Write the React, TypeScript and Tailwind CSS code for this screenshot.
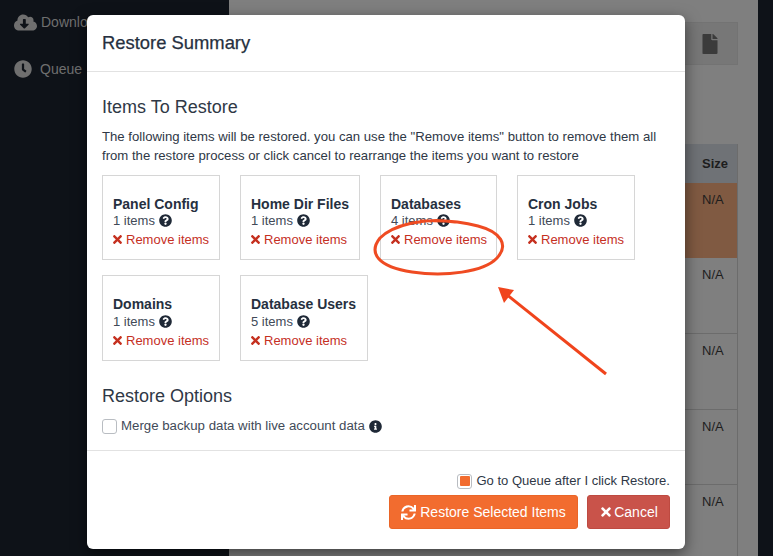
import React from "react";
import { FaCloudDownloadAlt, FaClock, FaFile, FaQuestionCircle, FaTimes, FaInfoCircle, FaSync } from "react-icons/fa";

const rowOne = [
  { t: "Panel Config", n: 1, w: "w-[118px]" },
  { t: "Home Dir Files", n: 1, w: "w-[120px]" },
  { t: "Databases", n: 4, w: "w-[117px]" },
  { t: "Cron Jobs", n: 1, w: "w-[118px]" },
];
const rowTwo = [
  { t: "Domains", n: 1, w: "w-[118px]" },
  { t: "Database Users", n: 5, w: "w-[128px]" },
];

function Card({ t, n, w, tall }: { t: string; n: number; w: string; tall?: boolean }) {
  return (
    <div className={`${w} ${tall ? "h-[86px]" : "h-[85px]"} border border-[#d6d6d6] pt-[20px] pl-[10px] shrink-0`}>
      <div className="text-[14px] leading-[16px] font-bold text-[#263040]">{t}</div>
      <div className={`flex items-center gap-[4px] text-[13px] leading-[17px] ${tall ? "mt-[1px]" : ""} text-[#414a58]`}>
        <span>{n} items</span>
        <FaQuestionCircle className="text-[13px] text-[#1f2937]" />
      </div>
      <div className="flex items-center gap-[2px] text-[13px] leading-[19px] mt-[1px] text-[#c5301f]">
        <FaTimes className="text-[13px] -ml-[2px]" />
        <span>Remove items</span>
      </div>
    </div>
  );
}

function Row({ h, orange, border = true }: { h: number; orange?: boolean; border?: boolean }) {
  return (
    <div
      style={{ height: h }}
      className={`flex justify-end pr-[10px] pt-[8px] text-[13px] leading-[17px] text-[#1d1d1d] ${orange ? "bg-[#805a42]" : ""} ${border ? "border-b border-[#6c6c6c]" : ""}`}
    >
      <span className="w-[25px]">N/A</span>
    </div>
  );
}

export default function App() {
  return (
    <div className="relative h-[556px] w-[773px] overflow-hidden flex bg-[#7f7f7f] font-['Liberation_Sans',Arial,sans-serif]">
      <aside className="w-[229px] bg-[#0e1218] shrink-0 text-[#6f6f6f] text-[14px] pl-[14px] pt-[12px]">
        <div className="flex items-center gap-[4px] h-[20px]">
          <FaCloudDownloadAlt className="text-[23px]" />
          <span>Download</span>
        </div>
        <div className="flex items-center gap-[8px] h-[20px] mt-[27px]">
          <FaClock className="text-[18px]" />
          <span>Queue</span>
        </div>
      </aside>
      <main className="flex-1 pl-[20px] pr-[20px] pt-[22px]">
        <div className="h-[43px] bg-[#777777] border border-[#737373] flex justify-end items-center pr-[17px]">
          <FaFile className="text-[20px] text-[#3b3b3b]" />
        </div>
        <div className="mt-[79px] border-r border-[#6c6c6c]">
          <div className="h-[39px] bg-[#6f7276] flex justify-end items-center pr-[10px] text-[13px] font-bold text-[#1d1d1d]">
            <span className="w-[25px]">Size</span>
          </div>
          <Row h={75} orange border={false} />
          <Row h={76} />
          <Row h={76} />
          <Row h={75} />
          <Row h={80} border={false} />
        </div>
      </main>
      <div className="w-[15px] bg-[#0e1218] shrink-0" />

      <div className="absolute left-[87px] top-[15px] w-[598px] h-[534px] bg-white rounded-[6px] shadow-[0_5px_15px_rgba(0,0,0,0.5)] flex flex-col text-[#2b3443]">
        <div className="h-[57px] border-b border-[#e2e2e2] pl-[15px] pt-[17px] text-[18.4px] leading-[22px] text-[#263040] [-webkit-text-stroke:0.25px_#263040]">
          Restore Summary
        </div>
        <div className="flex-1 px-[15px] pt-[25px]">
          <h2 className="text-[18px] leading-[20px] text-[#2f3846]">Items To Restore</h2>
          <p className="mt-[10px] text-[13.17px] leading-[19px] text-[#2f3846] w-[570px]">
            The following items will be restored. you can use the "Remove items" button to remove them all from the restore process or click cancel to rearrange the items you want to restore
          </p>
          <div className="mt-[10px] flex flex-col gap-[15px]">
            <div className="flex gap-[20px]">
              {rowOne.map((c) => (
                <Card key={c.t} {...c} />
              ))}
            </div>
            <div className="flex gap-[20px]">
              {rowTwo.map((c) => (
                <Card key={c.t} {...c} tall />
              ))}
            </div>
          </div>
          <h2 className="mt-[25px] text-[18px] leading-[20px] text-[#2f3846]">Restore Options</h2>
          <label className="mt-[11px] flex items-center text-[13.25px] leading-[18px] text-[#414a58]">
            <span className="w-[15px] h-[15px] rounded-[3px] border border-[#b9bdc2] bg-white mr-[4px]" />
            <span>Merge backup data with live account data</span>
            <FaInfoCircle className="ml-[4px] text-[13px] text-[#1f2937]" />
          </label>
        </div>
        <div className="h-[99px] border-t border-[#e2e2e2] px-[15px] pt-[21px] flex flex-col items-end">
          <label className="flex items-center text-[13.05px] leading-[18px] text-[#2f3846]">
            <span className="w-[15px] h-[15px] rounded-[3px] border border-[#b9bdc2] bg-white flex items-center justify-center mr-[4px]">
              <span className="w-[10px] h-[10px] rounded-[1px] bg-[#f26c2f]" />
            </span>
            Go to Queue after I click Restore.
          </label>
          <div className="mt-[5px] flex gap-[9px]">
            <button className="h-[34px] w-[189px] rounded-[3px] bg-[#f26c2f] border border-[#ea6527] text-white text-[14px] flex items-center justify-center gap-[4px]">
              <FaSync className="text-[15px]" />
              Restore Selected Items
            </button>
            <button className="h-[34px] w-[83px] rounded-[3px] bg-[#c9534a] border border-[#be4a41] text-white text-[14px] flex items-center justify-center gap-[1px]">
              <FaTimes className="text-[14px]" />
              Cancel
            </button>
          </div>
        </div>
      </div>

      <svg className="absolute left-0 top-0 pointer-events-none" width="773" height="556" viewBox="0 0 773 556">
        <path
          d="M455 222 C425 217 393 225 380 238 C368 253 378 267 412 272 C445 277 484 272 497 258 C509 245 501 232 478 226 C460 221 440 220 420 221"
          fill="none"
          stroke="#ef4b22"
          strokeWidth="3"
        />
        <line x1="606" y1="374" x2="506" y2="294" stroke="#f0441c" strokeWidth="3" />
        <polygon points="498,287 514,290 504,303" fill="#f0441c" />
      </svg>
    </div>
  );
}
